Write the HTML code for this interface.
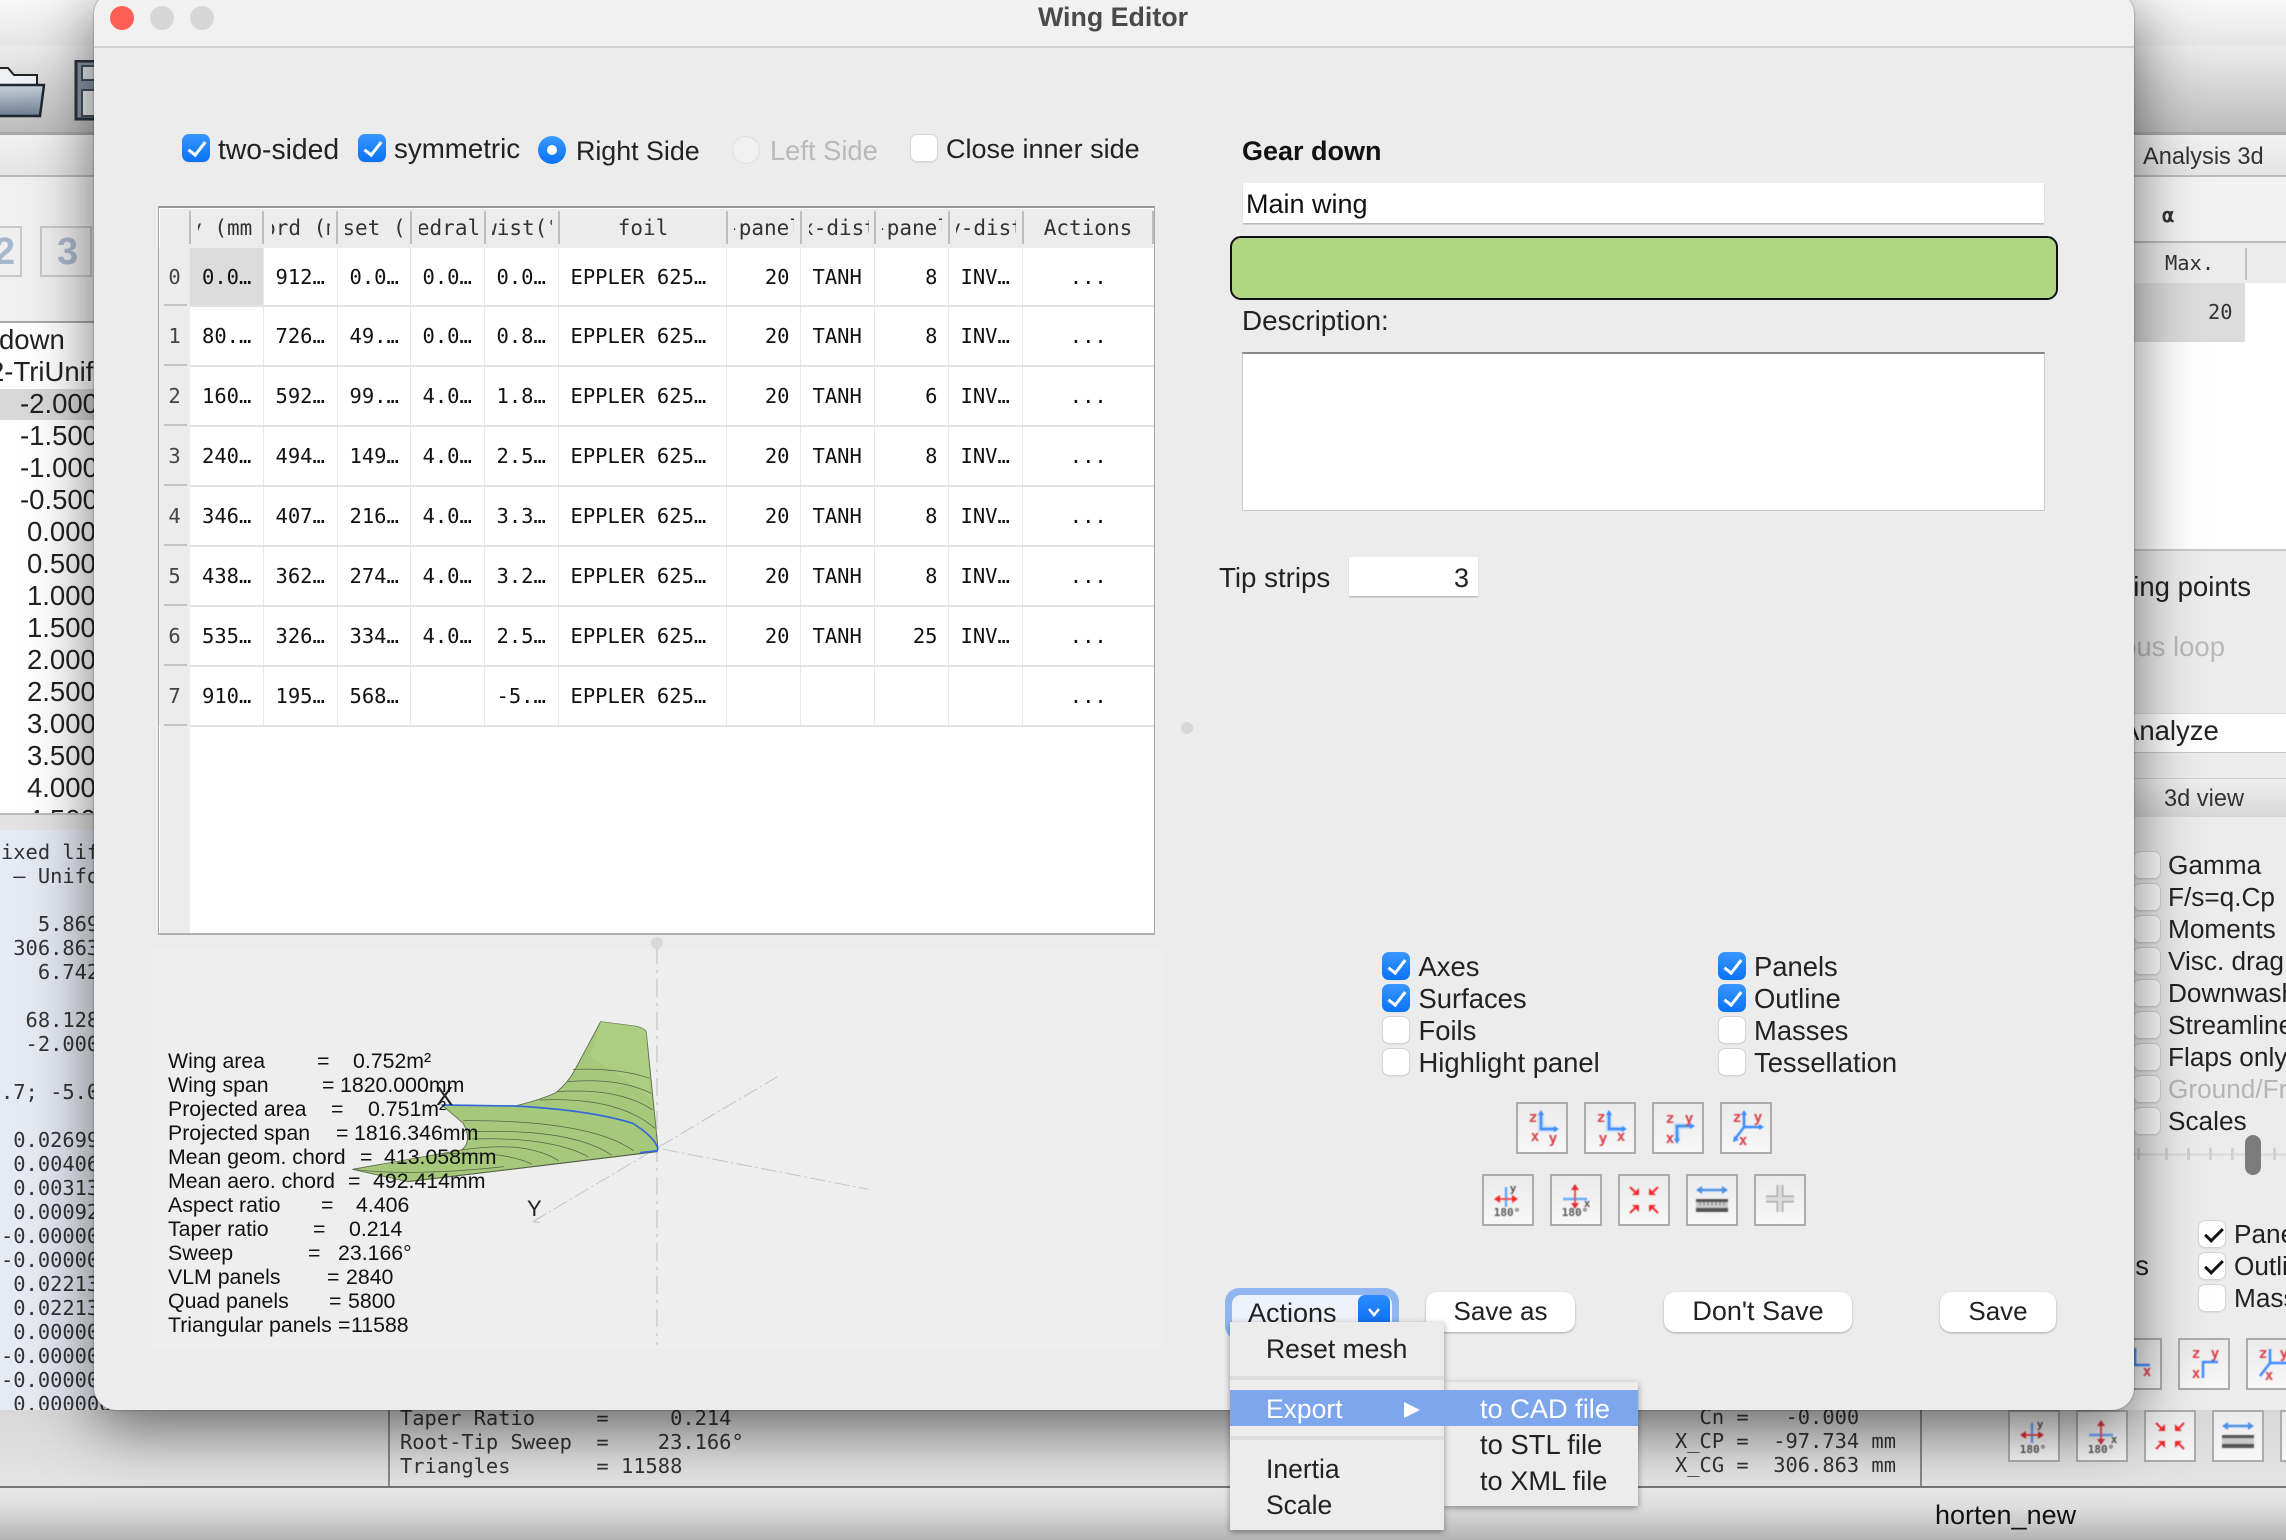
<!DOCTYPE html>
<html><head><meta charset="utf-8"><title>Wing Editor</title>
<style>
html,body{margin:0;padding:0;width:2286px;height:1540px;overflow:hidden;background:#e8e8e8}
body{position:relative;font-family:"Liberation Sans",sans-serif;color:#222}
div,span,svg,pre{position:absolute}
.t{white-space:nowrap;line-height:40px;height:40px;font-size:27.5px}
.rl{font-size:26.2px}
.m{font-family:"DejaVu Sans Mono","Liberation Mono",monospace;font-size:20.4px;color:#333;white-space:pre}
.cb{width:28px;height:28px;border-radius:7px;background:#fff;border:1px solid #d4d4d4;box-sizing:border-box;box-shadow:0 1px 1px rgba(0,0,0,.06)}
.cb.on{background:linear-gradient(#3a97ff,#0a72f5);border:0}
.cb.on:after{content:"";position:absolute;left:9.5px;top:3.5px;width:7px;height:15px;border:solid #fff;border-width:0 3.5px 3.5px 0;transform:rotate(38deg)}
.cb.cw:after{content:"";position:absolute;left:9.5px;top:3px;width:7px;height:15px;border:solid #111;border-width:0 3.5px 3.5px 0;transform:rotate(45deg)}
.ib{width:52px;height:52px;box-sizing:border-box;border:2.5px solid #acacac;background:linear-gradient(#ebebeb,#f7f7f7)}
.ib svg{left:-2.5px;top:-2.5px;width:52px;height:52px;filter:blur(.45px)}
.ib text{font-family:"DejaVu Sans Mono",monospace;font-size:14.5px;font-weight:bold;fill:#d8434c;text-anchor:middle}
.ib .g{fill:#555;font-size:11px;font-weight:bold}
.btn{background:#fff;border-radius:11px;box-shadow:0 1px 2px rgba(0,0,0,.3);height:40px}
table{position:absolute;left:159px;top:248px;width:995px;border-collapse:collapse;table-layout:fixed;font-family:"DejaVu Sans Mono","Liberation Mono",monospace;font-size:20.5px;color:#111;background:transparent}
td{padding:0 12px;height:60px;box-sizing:border-box;border-bottom:2px solid #e3e3e3;border-right:1px solid #e9e9e9;white-space:nowrap;overflow:hidden;background:#fff;position:relative}
tr:first-child td{height:58px}
td:first-child{background:#ececec;text-align:center;padding:0;border-right:0;border-bottom:0;color:#444}
td:first-child:after{content:"";position:absolute;left:5px;right:3px;bottom:0;height:2px;background:#c4c4c4}
td:last-child{text-align:center;border-right:0;padding:0}
td.r{text-align:right;padding-right:10px}
.h{top:209px;height:38px;display:flex;justify-content:center;align-items:center;overflow:hidden;font-family:"DejaVu Sans Mono",monospace;font-size:21px;color:#333;white-space:nowrap}
.h b{flex:none;font-weight:normal}
.s{top:211px;width:1.5px;height:33px;background:#bdbdbd}
.info{font-size:21.3px;line-height:24px;height:24px;white-space:nowrap;left:168px;color:#111}
.info i{position:absolute;font-style:normal;top:0}
</style></head>
<body>

<!-- ========== BACKGROUND APP ========== -->
<div style="left:0;top:0;width:2286px;height:46px;background:linear-gradient(#f8f8f8,#e6e6e6)"></div>
<div style="left:0;top:46px;width:2286px;height:86px;background:linear-gradient(#ececec,#bdbdbd)"></div>
<div style="left:0;top:132px;width:2286px;height:3px;background:#a9a9a9"></div>
<div style="left:0;top:135px;width:2286px;height:41px;background:linear-gradient(#f2f2f2,#e4e4e4)"></div>
<div style="left:0;top:175px;width:2286px;height:2px;background:#bdbdbd"></div>

<!-- left toolbar -->
<svg style="left:0;top:60px" width="94" height="62" viewBox="0 0 94 62">
<defs><linearGradient id="fd" x1="0" y1="0" x2="0" y2="1"><stop offset="0" stop-color="#c8d2de"/><stop offset="1" stop-color="#6e7f92"/></linearGradient></defs>
<path d="M-4 8H8L14 15H37V30H-4Z" fill="#eef1f4" stroke="#222" stroke-width="2"/>
<path d="M-4 25H44L40 56H-4Z" fill="url(#fd)" stroke="#1d2730" stroke-width="2.5"/>
<rect x="76" y="1" width="24" height="58" fill="#8b99a9" stroke="#2a3642" stroke-width="3"/>
<rect x="82" y="6" width="16" height="14" fill="#e6ebf0" stroke="#47525e" stroke-width="2"/>
<rect x="82" y="30" width="16" height="26" fill="#f0f3f5" stroke="#47525e" stroke-width="2"/>
</svg>
<div style="left:0;top:177px;width:100px;height:145px;background:#f0f0f0"></div>
<div style="left:-18px;top:226px;width:40px;height:51px;border:2px solid #c9c9c9;background:#efefef;box-sizing:border-box"></div>
<div style="left:40px;top:226px;width:52px;height:51px;border:2px solid #c9c9c9;background:#efefef;box-sizing:border-box"></div>
<div class="t" style="left:-6px;top:232px;font-size:38px;font-weight:bold;color:#a8b8cc">2</div>
<div class="t" style="left:57px;top:232px;font-size:38px;font-weight:bold;color:#a8b8cc">3</div>

<!-- left list -->
<div style="left:0;top:321px;width:100px;height:2px;background:#a8a8a8"></div>
<div style="left:0;top:323px;width:100px;height:491px;background:#fff"></div>
<div style="left:0;top:389px;width:100px;height:31px;background:#d9d9d9"></div>
<div class="t" style="left:-1px;top:320px">down</div>
<div class="t" style="left:-11px;top:352px">2-TriUnif</div>
<div class="t" style="left:20px;top:384px">-2.000</div>
<div class="t" style="left:20px;top:416px">-1.500</div>
<div class="t" style="left:20px;top:448px">-1.000</div>
<div class="t" style="left:20px;top:480px">-0.500</div>
<div class="t" style="left:27px;top:512px">0.000</div>
<div class="t" style="left:27px;top:544px">0.500</div>
<div class="t" style="left:27px;top:576px">1.000</div>
<div class="t" style="left:27px;top:608px">1.500</div>
<div class="t" style="left:27px;top:640px">2.000</div>
<div class="t" style="left:27px;top:672px">2.500</div>
<div class="t" style="left:27px;top:704px">3.000</div>
<div class="t" style="left:27px;top:736px">3.500</div>
<div class="t" style="left:27px;top:768px">4.000</div>
<div style="left:0;top:800px;width:100px;height:14px;overflow:hidden"><div class="t" style="left:27px;top:0">4.500</div></div>
<div style="left:0;top:813px;width:100px;height:2px;background:#bbb"></div>
<div style="left:0;top:815px;width:100px;height:15px;background:#e2e2e2"></div>

<!-- left results pane -->
<div style="left:0;top:830px;width:362px;height:630px;background:linear-gradient(90deg,#e6eaf3,#dfe3ec);border-right:2px solid #c7ccd8;border-bottom:2px solid #c7ccd8;box-sizing:border-box"></div>
<pre class="m" style="left:1px;top:840px;margin:0;line-height:24px">ixed lift
 – Unifo

   5.869
 306.863
   6.742

  68.128
  -2.000

.7; -5.0

 0.02699
 0.00406
 0.00313
 0.00092
-0.00000
-0.00000
 0.02213
 0.02213
 0.00000
-0.00000
-0.00000
 0.000006</pre>
<pre class="m" style="left:1px;top:1440px;margin:0;line-height:24px">ce, body axes:</pre>

<!-- right upper pane -->
<div class="t" style="left:2143px;top:137px;font-size:23.6px;color:#333">Analysis 3d</div>
<div style="left:2134px;top:177px;width:152px;height:65px;background:#f2f2f2"></div>
<div class="m" style="left:2162px;top:202px;font-weight:bold;line-height:26px">α</div>
<div style="left:2134px;top:241px;width:152px;height:2px;background:#bbb"></div>
<div style="left:2134px;top:243px;width:152px;height:307px;background:#fff"></div>
<div style="left:2134px;top:243px;width:152px;height:40px;background:#ececec"></div>
<div class="m" style="left:2165px;top:250px;line-height:26px">Max.</div>
<div style="left:2245px;top:248px;width:1.5px;height:32px;background:#c0c0c0"></div>
<div style="left:2134px;top:283px;width:111px;height:59px;background:#dcdcdc"></div>
<div class="m" style="left:2208px;top:299px;line-height:26px">20</div>
<div style="left:2134px;top:550px;width:152px;height:860px;background:#ececec"></div>
<div style="left:2134px;top:549px;width:152px;height:1.5px;background:#c9c9c9"></div>
<div class="t" style="right:35px;top:567px">Sampling points</div>
<div class="t" style="right:61px;top:627px;color:#b9b9b9">Continuous loop</div>
<div style="left:2100px;top:713px;width:186px;height:38px;background:#fff;border-bottom:1px solid #c8c8c8;border-top:1px solid #ddd"></div>
<div class="t" style="left:2121px;top:711px">Analyze</div>
<div style="left:2100px;top:778px;width:186px;height:38px;background:linear-gradient(#f0f0f0,#d6d6d6);border-top:1px solid #cfcfcf"></div>
<div class="t" style="left:2164px;top:779px;font-size:23.6px;color:#333">3d view</div>
<div class="cb" style="left:2133px;top:851px"></div><div class="t rl" style="left:2168px;top:845px">Gamma</div>
<div class="cb" style="left:2133px;top:883px"></div><div class="t rl" style="left:2168px;top:877px">F/s=q.Cp</div>
<div class="cb" style="left:2133px;top:915px"></div><div class="t rl" style="left:2168px;top:909px">Moments</div>
<div class="cb" style="left:2133px;top:947px"></div><div class="t rl" style="left:2168px;top:941px">Visc. drag</div>
<div class="cb" style="left:2133px;top:979px"></div><div class="t rl" style="left:2168px;top:973px">Downwash</div>
<div class="cb" style="left:2133px;top:1011px"></div><div class="t rl" style="left:2168px;top:1005px">Streamlines</div>
<div class="cb" style="left:2133px;top:1043px"></div><div class="t rl" style="left:2168px;top:1037px">Flaps only</div>
<div class="cb" style="left:2133px;top:1075px"></div><div class="t rl" style="left:2168px;top:1069px;color:#b5b5b5">Ground/Free</div>
<div class="cb" style="left:2133px;top:1107px"></div><div class="t rl" style="left:2168px;top:1101px">Scales</div>
<div style="left:2134px;top:1153px;width:152px;height:3px;background:#dedede"></div>
<div style="left:2137px;top:1148px;width:3px;height:12px;background:#d0d0d0"></div>
<div style="left:2165px;top:1148px;width:3px;height:12px;background:#d0d0d0"></div>
<div style="left:2187px;top:1148px;width:3px;height:12px;background:#d0d0d0"></div>
<div style="left:2209px;top:1148px;width:3px;height:12px;background:#d0d0d0"></div>
<div style="left:2231px;top:1148px;width:3px;height:12px;background:#d0d0d0"></div>
<div style="left:2273px;top:1148px;width:3px;height:12px;background:#d0d0d0"></div>
<div style="left:2245px;top:1135px;width:16px;height:40px;border-radius:8px;background:#7c7c7c"></div>
<div class="cb cw" style="left:2198px;top:1220px"></div><div class="t rl" style="left:2234px;top:1214px">Panels</div>
<div class="cb cw" style="left:2198px;top:1252px"></div><div class="t rl" style="left:2234px;top:1246px">Outline</div>
<div class="cb" style="left:2198px;top:1284px"></div><div class="t rl" style="left:2234px;top:1278px">Masses</div>
<div class="t" style="left:2120px;top:1246px">es</div>

<!-- right bg icons row 1 -->
<div class="ib" style="left:2110px;top:1338px"><svg viewBox="0 0 52 52"><path d="M25 10V27H40" fill="none" stroke="#3b8bff" stroke-width="2.5"/><text x="37" y="38">x</text></svg></div>
<div class="ib" style="left:2178px;top:1338px"><svg viewBox="0 0 52 52"><path d="M40 24H25V40" fill="none" stroke="#3b8bff" stroke-width="2.5"/><text x="18" y="20">z</text><text x="37" y="20">y</text><text x="18" y="40">x</text></svg></div>
<div class="ib" style="left:2246px;top:1338px"><svg viewBox="0 0 52 52"><path d="M24 11V25H42M24 25L14 38" fill="none" stroke="#3b8bff" stroke-width="2.5"/><text x="17" y="20">z</text><text x="38" y="20">y</text><text x="23" y="42">x</text></svg></div>

<!-- bottom strip -->
<div style="left:0;top:1410px;width:2286px;height:76px;background:linear-gradient(#d8d8d8,#e4e4e4)"></div>
<div style="left:388px;top:1408px;width:1.5px;height:78px;background:#888"></div>
<div style="left:1920px;top:1408px;width:1.5px;height:78px;background:#888"></div>
<pre class="m" style="left:400px;top:1406px;margin:0;line-height:24px">Taper Ratio     =     0.214
Root-Tip Sweep  =    23.166°
Triangles       = 11588</pre>
<pre class="m" style="left:1675px;top:1405px;margin:0;line-height:24px">  Cn =   -0.000
X_CP =  -97.734 mm
X_CG =  306.863 mm</pre>
<div class="ib" style="left:2008px;top:1410px"><svg viewBox="0 0 52 52"><path d="M24 13V33" stroke="#68a8ff" stroke-width="2.5"/><path d="M14 25H34" stroke="#e8555a" stroke-width="2"/><path d="M12 25l6-4v8zM36 25l-6-4v8z" fill="#d8323a"/><text class="g" x="32" y="18">y</text><text class="g" x="25" y="43">180°</text></svg></div>
<div class="ib" style="left:2076px;top:1410px"><svg viewBox="0 0 52 52"><path d="M13 25H37" stroke="#68a8ff" stroke-width="2.5"/><path d="M25 12V32" stroke="#e8555a" stroke-width="2"/><path d="M25 10l-4 6h8zM25 35l-4-6h8z" fill="#d8323a"/><text class="g" x="38" y="33">x</text><text class="g" x="25" y="43">180°</text></svg></div>
<div class="ib" style="left:2144px;top:1410px"><svg viewBox="0 0 52 52"><g stroke="#ef2b2b" fill="#ef2b2b"><path d="M12 13L18 19M40 13L34 19M12 39L18 33M40 39L34 33" stroke-width="2"/><path d="M21 21V14L14 21ZM31 21V14L38 21ZM21 31V38L14 31ZM31 31V38L38 31Z" stroke="none"/></g></svg></div>
<div class="ib" style="left:2212px;top:1410px"><svg viewBox="0 0 52 52"><path d="M13 16H39" stroke="#4a8fe8" stroke-width="2.5"/><path d="M10 16l6-4v8zM42 16l-6-4v8z" fill="#4a8fe8"/><rect x="10" y="25" width="32" height="3" fill="#555"/><rect x="10" y="28" width="32" height="6" fill="#c9c9c9"/><rect x="10" y="34" width="32" height="4" fill="#555"/></svg></div>
<div class="ib" style="left:2280px;top:1410px"></div>
<div style="left:0;top:1485.5px;width:2286px;height:2px;background:#777"></div>
<div style="left:0;top:1488px;width:2286px;height:52px;background:linear-gradient(#e8e8e8,#dcdcdc 40%,#b4b4b4)"></div>
<div class="t" style="left:1935px;top:1495px;font-size:27px;color:#111">horten_new</div>

<!-- ========== WINDOW ========== -->
<div style="left:94px;top:-8px;width:2040px;height:1418px;background:#ececec;border-radius:22px;box-shadow:0 16px 64px rgba(0,0,0,.55),0 0 2px rgba(0,0,0,.4)"></div>
<div style="left:94px;top:-8px;width:2040px;height:54px;background:#f1f1f1;border-radius:22px 22px 0 0;border-bottom:2px solid #d0d0d0"></div>
<div style="left:110px;top:6px;width:24px;height:24px;border-radius:50%;background:#ff5f57"></div>
<div style="left:150px;top:6px;width:24px;height:24px;border-radius:50%;background:#d6d6d6"></div>
<div style="left:190px;top:6px;width:24px;height:24px;border-radius:50%;background:#d6d6d6"></div>
<div class="t" style="left:913px;width:400px;top:-3px;text-align:center;font-weight:bold;font-size:26.8px;color:#4a4a4a">Wing Editor</div>

<!-- top checkboxes -->
<div class="cb on" style="left:182px;top:134px"></div><div class="t" style="left:218px;top:129px;font-size:28.3px">two-sided</div>
<div class="cb on" style="left:358px;top:134px"></div><div class="t" style="left:394px;top:129px;font-size:27.7px">symmetric</div>
<div style="left:538px;top:136px;width:28px;height:28px;border-radius:50%;background:linear-gradient(#3a97ff,#0a72f5)"></div>
<div style="left:547px;top:145px;width:10px;height:10px;border-radius:50%;background:#fff"></div>
<div class="t" style="left:576px;top:131px;font-size:26.8px">Right Side</div>
<div style="left:732px;top:136px;width:28px;height:28px;border-radius:50%;background:#f0f0f0;border:1px solid #dfdfdf;box-sizing:border-box"></div>
<div class="t" style="left:770px;top:131px;font-size:27.3px;color:#b9b9b9">Left Side</div>
<div class="cb" style="left:910px;top:134px"></div><div class="t" style="left:946px;top:129px;font-size:27px">Close inner side</div>

<!-- table -->
<div style="left:158px;top:206px;width:997px;height:729px;box-sizing:border-box;border:1.5px solid #a8a8a8;border-top:2.5px solid #999;border-bottom:2.5px solid #b0b0b0;background:#fff"></div>
<div style="left:160px;top:209px;width:30px;height:724px;background:#ececec"></div>
<div style="left:190px;top:209px;width:963px;height:39px;background:#ececec"></div>
<div class="h" style="left:198px;width:58px"><b>y (mm)</b></div>
<div class="h" style="left:272px;width:58px"><b>chord (mm)</b></div>
<div class="h" style="left:345px;width:58px"><b>offset (mm)</b></div>
<div class="h" style="left:419px;width:59px"><b>dihedral(°)</b></div>
<div class="h" style="left:492px;width:60px"><b>twist(°)</b></div>
<div class="h" style="left:561px;width:164px"><b>foil</b></div>
<div class="h" style="left:734px;width:60px"><b>x-panels</b></div>
<div class="h" style="left:809px;width:60px"><b>x-dist</b></div>
<div class="h" style="left:882px;width:60px"><b>y-panels</b></div>
<div class="h" style="left:956px;width:60px"><b>y-dist</b></div>
<div class="h" style="left:1024px;width:128px"><b>Actions</b></div>
<div class="s" style="left:189px"></div><div class="s" style="left:262px"></div><div class="s" style="left:336px"></div><div class="s" style="left:410px"></div><div class="s" style="left:484px"></div><div class="s" style="left:558px"></div><div class="s" style="left:726px"></div><div class="s" style="left:800px"></div><div class="s" style="left:874px"></div><div class="s" style="left:948px"></div><div class="s" style="left:1022px"></div><div class="s" style="left:1152px"></div>

<table>
<colgroup><col style="width:31px"><col style="width:73px"><col style="width:74px"><col style="width:73px"><col style="width:74px"><col style="width:74px"><col style="width:168px"><col style="width:74px"><col style="width:74px"><col style="width:74px"><col style="width:74px"><col style="width:132px"></colgroup>
<tr><td>0</td><td style="background:#dcdcdc">0.0…</td><td>912…</td><td>0.0…</td><td>0.0…</td><td>0.0…</td><td>EPPLER 625…</td><td class="r">20</td><td>TANH</td><td class="r">8</td><td>INV…</td><td>...</td></tr>
<tr><td>1</td><td>80.…</td><td>726…</td><td>49.…</td><td>0.0…</td><td>0.8…</td><td>EPPLER 625…</td><td class="r">20</td><td>TANH</td><td class="r">8</td><td>INV…</td><td>...</td></tr>
<tr><td>2</td><td>160…</td><td>592…</td><td>99.…</td><td>4.0…</td><td>1.8…</td><td>EPPLER 625…</td><td class="r">20</td><td>TANH</td><td class="r">6</td><td>INV…</td><td>...</td></tr>
<tr><td>3</td><td>240…</td><td>494…</td><td>149…</td><td>4.0…</td><td>2.5…</td><td>EPPLER 625…</td><td class="r">20</td><td>TANH</td><td class="r">8</td><td>INV…</td><td>...</td></tr>
<tr><td>4</td><td>346…</td><td>407…</td><td>216…</td><td>4.0…</td><td>3.3…</td><td>EPPLER 625…</td><td class="r">20</td><td>TANH</td><td class="r">8</td><td>INV…</td><td>...</td></tr>
<tr><td>5</td><td>438…</td><td>362…</td><td>274…</td><td>4.0…</td><td>3.2…</td><td>EPPLER 625…</td><td class="r">20</td><td>TANH</td><td class="r">8</td><td>INV…</td><td>...</td></tr>
<tr><td>6</td><td>535…</td><td>326…</td><td>334…</td><td>4.0…</td><td>2.5…</td><td>EPPLER 625…</td><td class="r">20</td><td>TANH</td><td class="r">25</td><td>INV…</td><td>...</td></tr>
<tr><td>7</td><td>910…</td><td>195…</td><td>568…</td><td></td><td>-5.…</td><td>EPPLER 625…</td><td class="r"></td><td></td><td class="r"></td><td></td><td>...</td></tr>
</table>

<!-- splitter handles -->
<div style="left:1181px;top:722px;width:12px;height:12px;border-radius:50%;background:#d8d8d8"></div>
<div style="left:651px;top:937px;width:12px;height:12px;border-radius:50%;background:#d8d8d8"></div>

<!-- 3D view -->
<div style="left:152px;top:950px;width:1010px;height:400px;background:#eeeeee"></div>
<svg style="left:340px;top:940px;overflow:visible" width="560" height="410" viewBox="0 0 560 410">
<g fill="none" stroke="#d4d4d4" stroke-width="2" stroke-dasharray="18 6 3 6"><path d="M317 6V405"/></g>
<g transform="translate(0,60) scale(.3571,.3333)">
<g fill="none" stroke="#c4c4c4" stroke-width="3" stroke-dasharray="44 10 6 10">
<path d="M905 448L1480 568"/><path d="M540 665L1225 230"/><path d="M540 665L560 668"/>
</g>
<path d="M730 65L825 78Q858 85 858 100L890 440L888 455L620 490L190 545L35 508L340 450Q372 425 345 370L285 315L490 318Q560 300 605 278Q640 245 655 215Z" fill="#a5c87a" stroke="#5c6b4a" stroke-width="2.5"/>
<path d="M730 65L825 78Q858 85 858 100L872 300L800 240L700 170Z" fill="#afd283" opacity=".6"/>
<g fill="none" stroke="#55624a" stroke-width="2.2">
<path d="M652 208Q780 203 868 235"/>
<path d="M636 245Q780 232 872 280"/>
<path d="M610 275Q780 262 876 330"/>
<path d="M560 300Q780 290 882 385"/>
<path d="M345 362Q700 360 822 452"/>
<path d="M372 395Q650 385 760 465"/>
<path d="M370 417Q590 410 695 470"/>
<path d="M340 450Q520 420 612 482"/>
<path d="M290 462Q450 450 537 492"/>
<path d="M35 508Q200 530 460 500"/>
<path d="M190 545L888 455" stroke-width="3"/>
</g>
<path d="M285 315L490 318Q700 330 820 370Q880 410 890 445L888 452L840 458" fill="none" stroke="#3768d8" stroke-width="5"/>
</g>
</svg>
<div class="t" style="left:436px;top:1076px;font-size:26px;color:#222">X</div>
<div class="t" style="left:527px;top:1189px;font-size:22px;color:#222">Y</div>

<div class="info" style="top:1049px">Wing area<i style="left:149px">=</i><i style="left:185px">0.752m²</i></div>
<div class="info" style="top:1073px">Wing span<i style="left:154px">=</i><i style="left:172px">1820.000mm</i></div>
<div class="info" style="top:1097px">Projected area<i style="left:163px">=</i><i style="left:200px">0.751m²</i></div>
<div class="info" style="top:1121px">Projected span<i style="left:168px">=</i><i style="left:186px">1816.346mm</i></div>
<div class="info" style="top:1145px">Mean geom. chord<i style="left:192px">=</i><i style="left:216px">413.058mm</i></div>
<div class="info" style="top:1169px">Mean aero. chord<i style="left:180px">=</i><i style="left:205px">492.414mm</i></div>
<div class="info" style="top:1193px">Aspect ratio<i style="left:153px">=</i><i style="left:188px">4.406</i></div>
<div class="info" style="top:1217px">Taper ratio<i style="left:145px">=</i><i style="left:181px">0.214</i></div>
<div class="info" style="top:1241px">Sweep<i style="left:140px">=</i><i style="left:170px">23.166°</i></div>
<div class="info" style="top:1265px">VLM panels<i style="left:159px">=</i><i style="left:178px">2840</i></div>
<div class="info" style="top:1289px">Quad panels<i style="left:161px">=</i><i style="left:180px">5800</i></div>
<div class="info" style="top:1313px">Triangular panels<i style="left:170px">=</i><i style="left:183px">11588</i></div>

<!-- right form -->
<div class="t" style="left:1242px;top:131px;font-weight:bold;font-size:27px;color:#111">Gear down</div>
<div style="left:1243px;top:183px;width:801px;height:40px;background:#fff;box-shadow:0 1.5px 1px rgba(0,0,0,.22);box-sizing:border-box"></div>
<div class="t" style="left:1246px;top:184px;font-size:27px;color:#111">Main wing</div>
<div style="left:1230px;top:236px;width:828px;height:64px;background:#afd683;border:2px solid #111;border-radius:11px;box-sizing:border-box"></div>
<div class="t" style="left:1242px;top:301px;font-size:27.8px">Description:</div>
<div style="left:1242px;top:352px;width:803px;height:159px;box-sizing:border-box;background:#fff;border:1.5px solid #c9c9c9;border-top:2px solid #888"></div>
<div class="t" style="left:1219px;top:558px;font-size:27.7px">Tip strips</div>
<div style="left:1349px;top:557px;width:129px;height:39px;background:#fff;box-shadow:0 1.5px 1px rgba(0,0,0,.2)"></div>
<div class="t" style="left:1454px;top:558px;font-size:27px">3</div>

<!-- view checkboxes -->
<div class="cb on" style="left:1382px;top:952px"></div><div class="t" style="left:1418.5px;top:947px;font-size:27.4px">Axes</div>
<div class="cb on" style="left:1382px;top:984px"></div><div class="t" style="left:1418.5px;top:979px;font-size:27.4px">Surfaces</div>
<div class="cb" style="left:1382px;top:1016px"></div><div class="t" style="left:1418.5px;top:1011px;font-size:27.4px">Foils</div>
<div class="cb" style="left:1382px;top:1048px"></div><div class="t" style="left:1418.5px;top:1043px;font-size:27.4px">Highlight panel</div>
<div class="cb on" style="left:1718px;top:952px"></div><div class="t" style="left:1754px;top:947px;font-size:27.4px">Panels</div>
<div class="cb on" style="left:1718px;top:984px"></div><div class="t" style="left:1754px;top:979px;font-size:27.4px">Outline</div>
<div class="cb" style="left:1718px;top:1016px"></div><div class="t" style="left:1754px;top:1011px;font-size:27.4px">Masses</div>
<div class="cb" style="left:1718px;top:1048px"></div><div class="t" style="left:1754px;top:1043px;font-size:27.4px">Tessellation</div>

<!-- view icons row 1 -->
<div class="ib" style="left:1516px;top:1102px"><svg viewBox="0 0 52 52"><path d="M25 12V27H40" fill="none" stroke="#c9def8" stroke-width="6"/><path d="M25 12V27H40" fill="none" stroke="#3b8bff" stroke-width="2.5"/><path d="M25 8l-3 5h6zM43 27l-5-3v6z" fill="#3b8bff"/><text x="17" y="20">z</text><text x="19" y="39">x</text><text x="37" y="41">y</text></svg></div>
<div class="ib" style="left:1584px;top:1102px"><svg viewBox="0 0 52 52"><path d="M25 12V27H40" fill="none" stroke="#c9def8" stroke-width="6"/><path d="M25 12V27H40" fill="none" stroke="#3b8bff" stroke-width="2.5"/><path d="M25 8l-3 5h6zM43 27l-5-3v6z" fill="#3b8bff"/><text x="17" y="20">z</text><text x="19" y="41">y</text><text x="37" y="39">x</text></svg></div>
<div class="ib" style="left:1652px;top:1102px"><svg viewBox="0 0 52 52"><path d="M39 24H25V37" fill="none" stroke="#c9def8" stroke-width="6"/><path d="M39 24H25V38" fill="none" stroke="#3b8bff" stroke-width="2.5"/><path d="M43 24l-5-3v6zM25 42l-3-5h6z" fill="#3b8bff"/><text x="18" y="21">z</text><text x="37" y="21">y</text><text x="18" y="41">x</text></svg></div>
<div class="ib" style="left:1720px;top:1102px"><svg viewBox="0 0 52 52"><path d="M24 12V25H40M24 25L15 37" fill="none" stroke="#3b8bff" stroke-width="2.5"/><path d="M24 8l-3 5h6zM44 25l-5-3v6zM13 40l1-6 5 4z" fill="#3b8bff"/><text x="17" y="20">z</text><text x="38" y="20">y</text><text x="23" y="43">x</text></svg></div>

<!-- view icons row 2 -->
<div class="ib" style="left:1482px;top:1174px"><svg viewBox="0 0 52 52"><path d="M24 13V33" stroke="#68a8ff" stroke-width="2.5"/><path d="M14 25H34" stroke="#e8555a" stroke-width="2"/><path d="M12 25l6-4v8zM36 25l-6-4v8z" fill="#ef2b2b"/><text class="g" x="31" y="18">y</text><text class="g" x="25" y="42">180°</text></svg></div>
<div class="ib" style="left:1550px;top:1174px"><svg viewBox="0 0 52 52"><path d="M13 25H37" stroke="#68a8ff" stroke-width="2.5"/><path d="M25 12V32" stroke="#e8555a" stroke-width="2"/><path d="M25 10l-4 6h8zM25 35l-4-6h8z" fill="#ef2b2b"/><text class="g" x="37" y="33">x</text><text class="g" x="25" y="42">180°</text></svg></div>
<div class="ib" style="left:1618px;top:1174px"><svg viewBox="0 0 52 52"><g stroke="#ef2b2b" fill="#ef2b2b"><path d="M12 13L18 19M40 13L34 19M12 39L18 33M40 39L34 33" stroke-width="2"/><path d="M21 21V14L14 21ZM31 21V14L38 21ZM21 31V38L14 31ZM31 31V38L38 31Z" stroke="none"/></g></svg></div>
<div class="ib" style="left:1686px;top:1174px"><svg viewBox="0 0 52 52"><path d="M13 16H39" stroke="#4a8fe8" stroke-width="2.5"/><path d="M10 16l6-4v8zM42 16l-6-4v8z" fill="#4a8fe8"/><rect x="10" y="25" width="32" height="3" fill="#555"/><rect x="10" y="28" width="32" height="6" fill="#c9c9c9"/><rect x="10" y="34" width="32" height="4" fill="#555"/><path d="M14 28v3M18 28v3M22 28v3M26 28v3M30 28v3M34 28v3M38 28v3" stroke="#777" stroke-width="1"/></svg></div>
<div class="ib" style="left:1754px;top:1174px"><svg viewBox="0 0 52 52"><path d="M12 25H40M26 11V38" stroke="#adadad" stroke-width="7"/><path d="M12 25H40M26 11V38" stroke="#dcdcdc" stroke-width="4"/></svg></div>

<!-- bottom buttons -->
<div style="left:1225px;top:1288px;width:174px;height:52px;background:#8fb6f0;border-radius:14px"></div>
<div style="left:1232px;top:1295px;width:160px;height:38px;background:#eef2fa;border-radius:9px"></div>
<div class="t" style="left:1248px;top:1293px;font-size:27px">Actions</div>
<div style="left:1358px;top:1295px;width:32px;height:36px;background:linear-gradient(#2a8cff,#0a6af0);border-radius:7px"></div>
<svg style="left:1366px;top:1304px" width="16" height="16" viewBox="0 0 16 16"><path d="M3 5L8 11L13 5" fill="none" stroke="#fff" stroke-width="2.5"/></svg>
<div class="btn" style="left:1426px;top:1292px;width:149px"></div><div class="t" style="left:1426px;width:149px;top:1291px;text-align:center;font-size:26px">Save as</div>
<div class="btn" style="left:1664px;top:1292px;width:188px"></div><div class="t" style="left:1664px;width:188px;top:1291px;text-align:center;font-size:27px">Don't Save</div>
<div class="btn" style="left:1940px;top:1292px;width:116px"></div><div class="t" style="left:1940px;width:116px;top:1291px;text-align:center;font-size:26px">Save</div>

<!-- menus -->
<div style="left:1444px;top:1382px;width:194px;height:124px;background:#ececec;box-shadow:0 2px 6px rgba(0,0,0,.4)"></div>
<div style="left:1230px;top:1322px;width:214px;height:208px;background:#ececec;box-shadow:0 2px 6px rgba(0,0,0,.4)"></div>
<div style="left:1230px;top:1376px;width:214px;height:4px;background:#dcdcdc"></div>
<div style="left:1230px;top:1390px;width:408px;height:36px;background:#7ea6ec"></div>
<div style="left:1230px;top:1436px;width:214px;height:4px;background:#dcdcdc"></div>
<div class="t" style="left:1266px;top:1329px;font-size:26.5px">Reset mesh</div>
<div class="t" style="left:1266px;top:1389px;font-size:26.5px;color:#fff">Export</div>
<svg style="left:1404px;top:1402px" width="16" height="16"><path d="M0 0L16 8L0 16Z" fill="#fff"/></svg>
<div class="t" style="left:1266px;top:1449px;font-size:26.5px">Inertia</div>
<div class="t" style="left:1266px;top:1485px;font-size:26.5px">Scale</div>
<div class="t" style="left:1480px;top:1389px;font-size:27.2px;color:#fff">to CAD file</div>
<div class="t" style="left:1480px;top:1425px;font-size:27.4px">to STL file</div>
<div class="t" style="left:1480px;top:1461px;font-size:27.2px">to XML file</div>

</body></html>
